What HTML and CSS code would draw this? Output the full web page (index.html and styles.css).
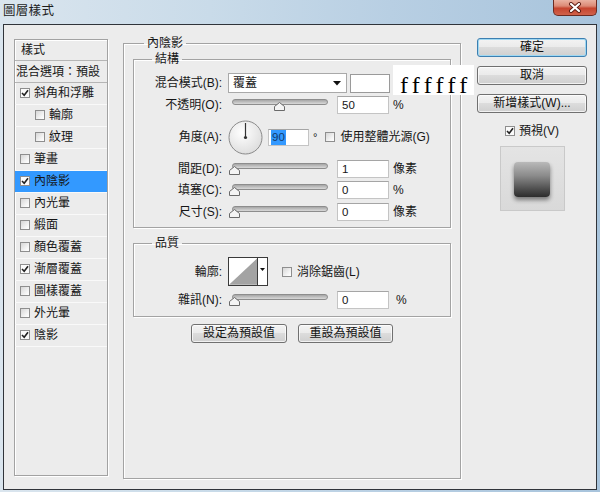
FILE: index.html
```html
<!DOCTYPE html>
<html lang="zh-Hant">
<head>
<meta charset="utf-8">
<title>圖層樣式</title>
<link rel="stylesheet" href="styles.css">
</head>
<body>
<div class="window">
  <div class="titlebar">
    <span class="title">圖層樣式</span>
    <div class="close">
      <svg width="14" height="11" viewBox="0 0 14 11"><path d="M3 2 L11 9 M11 2 L3 9" stroke="#5a1a12" stroke-width="4" stroke-linecap="round"/><path d="M3 2 L11 9 M11 2 L3 9" stroke="#ffffff" stroke-width="2.2" stroke-linecap="round"/></svg>
    </div>
  </div>

  <div class="frame">
    <div class="style-list">
      <div class="list-head">樣式</div>
      <div class="list-blend">混合選項：預設</div>
      <div class="list-item"><span class="cb checked"><svg width="8" height="8" viewBox="0 0 8 8"><path d="M1 4 L3.2 6.3 L7 1.2" fill="none" stroke="#222" stroke-width="1.6"/></svg></span>斜角和浮雕</div>
      <div class="list-item sub"><span class="cb"></span>輪廓</div>
      <div class="list-item sub"><span class="cb"></span>紋理</div>
      <div class="list-item"><span class="cb"></span>筆畫</div>
      <div class="list-item selected"><span class="cb checked"><svg width="8" height="8" viewBox="0 0 8 8"><path d="M1 4 L3.2 6.3 L7 1.2" fill="none" stroke="#222" stroke-width="1.6"/></svg></span>內陰影</div>
      <div class="list-item"><span class="cb"></span>內光暈</div>
      <div class="list-item"><span class="cb"></span>緞面</div>
      <div class="list-item"><span class="cb"></span>顏色覆蓋</div>
      <div class="list-item"><span class="cb checked"><svg width="8" height="8" viewBox="0 0 8 8"><path d="M1 4 L3.2 6.3 L7 1.2" fill="none" stroke="#222" stroke-width="1.6"/></svg></span>漸層覆蓋</div>
      <div class="list-item"><span class="cb"></span>圖樣覆蓋</div>
      <div class="list-item"><span class="cb"></span>外光暈</div>
      <div class="list-item"><span class="cb checked"><svg width="8" height="8" viewBox="0 0 8 8"><path d="M1 4 L3.2 6.3 L7 1.2" fill="none" stroke="#222" stroke-width="1.6"/></svg></span>陰影</div>
    </div>

    <fieldset class="group outer">
      <legend>內陰影</legend>

      <fieldset class="group inner">
        <legend>結構</legend>
        <div class="form structure">
          <span class="lbl">混合模式(B):</span>
          <div class="ctl">
            <div class="select"><span>覆蓋</span><svg class="caret" width="8" height="5" viewBox="0 0 8 5"><path d="M0 0 H8 L4 4.5 Z" fill="#111"/></svg></div>
            <span class="color-swatch"></span>
            <span class="hex-note">ffffff</span>
          </div>

          <span class="lbl">不透明(O):</span>
          <div class="ctl">
            <div class="slider"><span class="track"></span><svg class="thumb" style="left:46px" width="11" height="9" viewBox="0 0 11 9"><polygon points="5.5,0.5 10.5,4.5 10.5,8.5 0.5,8.5 0.5,4.5" fill="#f4f4f4" stroke="#6a6a6a"/></svg></div>
            <span class="field">50</span><span class="unit">%</span>
          </div>

          <span class="lbl">角度(A):</span>
          <div class="ctl">
            <svg class="dial" width="35" height="35" viewBox="0 0 35 35">
              <defs><radialGradient id="dg" cx="40%" cy="35%" r="70%"><stop offset="0" stop-color="#ffffff"/><stop offset="1" stop-color="#dcdcdc"/></radialGradient></defs>
              <circle cx="17.5" cy="17.5" r="16.5" fill="url(#dg)" stroke="#8a8a8a"/>
              <line x1="17.5" y1="17.5" x2="17.5" y2="3" stroke="#333" stroke-width="1.2"/>
              <circle cx="17.5" cy="17.5" r="1.6" fill="#333"/>
            </svg>
            <span class="field angle"><span class="sel">90</span></span>
            <span class="deg">°</span>
            <span class="cb global-cb"></span>
            <span class="cb-text">使用整體光源(G)</span>
          </div>

          <span class="lbl">間距(D):</span>
          <div class="ctl">
            <div class="slider"><span class="track"></span><svg class="thumb" style="left:1px" width="11" height="9" viewBox="0 0 11 9"><polygon points="5.5,0.5 10.5,4.5 10.5,8.5 0.5,8.5 0.5,4.5" fill="#f4f4f4" stroke="#6a6a6a"/></svg></div>
            <span class="field">1</span><span class="unit">像素</span>
          </div>

          <span class="lbl">填塞(C):</span>
          <div class="ctl">
            <div class="slider"><span class="track"></span><svg class="thumb" style="left:1px" width="11" height="9" viewBox="0 0 11 9"><polygon points="5.5,0.5 10.5,4.5 10.5,8.5 0.5,8.5 0.5,4.5" fill="#f4f4f4" stroke="#6a6a6a"/></svg></div>
            <span class="field">0</span><span class="unit">%</span>
          </div>

          <span class="lbl">尺寸(S):</span>
          <div class="ctl">
            <div class="slider"><span class="track"></span><svg class="thumb" style="left:1px" width="11" height="9" viewBox="0 0 11 9"><polygon points="5.5,0.5 10.5,4.5 10.5,8.5 0.5,8.5 0.5,4.5" fill="#f4f4f4" stroke="#6a6a6a"/></svg></div>
            <span class="field">0</span><span class="unit">像素</span>
          </div>
        </div>
      </fieldset>

      <fieldset class="group inner quality">
        <legend>品質</legend>
        <div class="form quality-form">
          <span class="lbl">輪廓:</span>
          <div class="ctl">
            <div class="contour">
              <svg class="curve" width="29" height="27" viewBox="0 0 29 27"><polygon points="0,27 29,0 29,27" fill="#a3a3a3"/></svg>
              <span class="contour-arrow"><svg width="5" height="3" viewBox="0 0 5 3"><path d="M0 0 H5 L2.5 3 Z" fill="#111"/></svg></span>
            </div>
            <span class="cb aa-cb"></span>
            <span class="cb-text">消除鋸齒(L)</span>
          </div>

          <span class="lbl">雜訊(N):</span>
          <div class="ctl">
            <div class="slider"><span class="track"></span><svg class="thumb" style="left:1px" width="11" height="9" viewBox="0 0 11 9"><polygon points="5.5,0.5 10.5,4.5 10.5,8.5 0.5,8.5 0.5,4.5" fill="#f4f4f4" stroke="#6a6a6a"/></svg></div>
            <span class="field">0</span><span class="unit wide">%</span>
          </div>
        </div>
      </fieldset>

      <div class="defaults">
        <button class="btn set-default">設定為預設值</button>
        <button class="btn reset-default">重設為預設值</button>
      </div>
    </fieldset>

    <div class="side">
      <button class="btn side-btn primary">確定</button>
      <button class="btn side-btn">取消</button>
      <button class="btn side-btn">新增樣式(W)...</button>
      <div class="preview-toggle"><span class="cb checked"><svg width="8" height="8" viewBox="0 0 8 8"><path d="M1 4 L3.2 6.3 L7 1.2" fill="none" stroke="#222" stroke-width="1.6"/></svg></span><span>預視(V)</span></div>
      <div class="preview"><div class="preview-square"></div></div>
    </div>
  </div>
</div>
</body>
</html>
```

FILE: styles.css
```css
* { box-sizing: border-box; }
html, body { margin: 0; padding: 0; }
body {
  width: 600px;
  height: 492px;
  overflow: hidden;
  font-family: "Liberation Sans", "Noto Sans CJK TC", sans-serif;
  font-size: 12px;
  color: #161616;
}

.window {
  width: 600px;
  height: 492px;
  display: flex;
  flex-direction: column;
  background: linear-gradient(90deg, #dae5ee 0%, #c9dbe9 35%, #b8cfe3 65%, #a8c4dc 100%);
}

.titlebar {
  height: 24px;
  flex: none;
  display: flex;
  justify-content: space-between;
  align-items: flex-start;
  padding: 0 3px;
}
.title {
  margin-top: 4px;
  font-size: 12.5px;
  line-height: 15px;
  letter-spacing: 0.3px;
  color: #1c1c1c;
}
.close {
  width: 44px;
  height: 16px;
  border: 1px solid #6b2b22;
  border-top: none;
  border-radius: 0 0 5px 5px;
  background: linear-gradient(#eab2a2 0%, #dc8a76 40%, #c6452f 55%, #d0624b 100%);
  display: flex;
  align-items: center;
  justify-content: center;
}

.frame {
  flex: none;
  margin: 0 3px;
  height: 466px;
  border: 1px solid #30343a;
  background: #ececec;
  display: flex;
  align-items: flex-start;
  padding: 14px 0 0 10px;
}

/* left style list */
.style-list {
  flex: none;
  width: 94px;
  height: 437px;
  border: 1px solid #a2a2a2;
  box-shadow: 1px 1px 0 #ffffff, inset 1px 1px 0 #ffffff;
  line-height: 14px;
}
.list-head {
  height: 21px;
  padding: 3px 0 0 6px;
  border-bottom: 1px solid #b5b5b5;
}
.list-blend {
  height: 22px;
  padding: 4px 0 0 1px;
  border-bottom: 1px solid #b5b5b5;
  white-space: nowrap;
}
.list-item {
  height: 22px;
  display: flex;
  align-items: center;
  gap: 4px;
  padding: 0 0 1px 5px;
  border-bottom: 1px solid #f9f9f9;
  white-space: nowrap;
}
.list-item.sub { padding-left: 20px; }
.list-item.selected { background: #3399ff; }

.cb {
  flex: none;
  width: 10px;
  height: 10px;
  border: 1px solid #8e8e8e;
  background: linear-gradient(135deg, #d6d6d6 0%, #f6f6f6 70%, #ffffff 100%);
  display: inline-flex;
  align-items: center;
  justify-content: center;
}
.cb.checked { background: #fbfbfb; }

/* group boxes */
.group {
  margin: 0;
  min-width: 0;
  border: 1px solid #a3a3a3;
  box-shadow: 1px 1px 0 #ffffff, inset 1px 1px 0 #ffffff;
}
.group > legend {
  padding: 0 3px;
  line-height: 14px;
  font-size: 12px;
}
.outer {
  flex: none;
  width: 338px;
  height: 443px;
  margin: -3px 0 0 15px;
  padding: 2px 9px 0 9px;
}
.outer > legend { margin-left: 11px; }
.inner {
  width: 318px;
  padding: 6px 10px 5px 10px;
}
.inner > legend { margin-left: 8px; }
.quality { margin-top: 8px; }

.form {
  display: grid;
  grid-template-columns: 78px 1fr;
  column-gap: 6px;
  align-items: center;
}
.structure { grid-template-rows: 22px 22px 42px 21px 22px 21px; }
.quality-form { grid-template-rows: 31px 22px; row-gap: 2px; }

.lbl {
  text-align: right;
  white-space: nowrap;
  line-height: 14px;
}
.ctl {
  display: flex;
  align-items: center;
  white-space: nowrap;
  line-height: 14px;
}

.select {
  flex: none;
  width: 119px;
  height: 20px;
  border: 1px solid #a9a9a9;
  background: #ffffff;
  display: flex;
  align-items: center;
  justify-content: space-between;
  padding: 0 5px 0 4px;
}
.color-swatch {
  flex: none;
  width: 40px;
  height: 19px;
  margin-left: 3px;
  border: 1px solid #9a9a9a;
  background: #ffffff;
}
.hex-note {
  flex: none;
  height: 30px;
  margin: -6px 0 0 3px;
  padding: 0 2px 0 7px;
  background: #ffffff;
  font-family: "Liberation Serif", serif;
  font-size: 24px;
  line-height: 40px;
  letter-spacing: 4.3px;
  color: #000000;
}

.slider {
  flex: none;
  position: relative;
  width: 104px;
  height: 14px;
}
.track {
  display: block;
  margin: 1px 0 0 4px;
  width: 96px;
  height: 6px;
  border: 1px solid #8d8d8d;
  border-radius: 3px;
  background: linear-gradient(#a6a6a6, #d9d9d9);
}
.thumb {
  position: absolute;
  top: 4px;
}

.field {
  flex: none;
  width: 52px;
  height: 18px;
  margin-left: 5px;
  border: 1px solid #c4c4c4;
  border-top-color: #a5a5a5;
  background: #ffffff;
  padding-left: 4px;
  font-size: 11.5px;
  line-height: 16px;
}
.unit { margin-left: 4px; }
.unit.wide { margin-left: 7px; }

.dial { flex: none; display: block; }
.field.angle {
  width: 41px;
  height: 17px;
  margin-left: 5px;
  padding-left: 2px;
  line-height: 15px;
}
.sel {
  display: inline-block;
  background: #3399ff;
  color: #123a6b;
  padding: 0 1px;
}
.deg { margin-left: 4px; font-size: 11px; }
.global-cb { margin-left: 8px; }
.cb-text { margin-left: 5px; }

.contour {
  flex: none;
  display: flex;
  width: 40px;
  height: 29px;
  border: 1px solid #3a3a3a;
  background: #ffffff;
}
.curve { display: block; }
.contour-arrow {
  width: 10px;
  border-left: 1px solid #3a3a3a;
  display: flex;
  justify-content: center;
  padding-top: 10px;
}
.contour-arrow svg { display: block; }
.aa-cb { margin-left: 14px; }

/* buttons */
.btn {
  font: inherit;
  font-size: 12px;
  color: #111;
  height: 19px;
  padding: 0;
  line-height: 17px;
  border: 1px solid #707070;
  border-radius: 3px;
  background: linear-gradient(#f3f3f3 0%, #ebebeb 45%, #dcdcdc 50%, #cfcfcf 100%);
  box-shadow: inset 0 0 0 1px rgba(255,255,255,0.7);
}
.defaults {
  display: flex;
  justify-content: center;
  gap: 11px;
  margin-top: 7px;
}
.set-default { width: 96px; }
.reset-default { width: 95px; }

.side {
  flex: none;
  width: 110px;
  margin: -1px 0 0 16px;
  display: flex;
  flex-direction: column;
  align-items: center;
}
.side-btn { width: 110px; }
.side-btn + .side-btn { margin-top: 9px; }
.primary {
  border-color: #3c7fb1;
  box-shadow: inset 0 0 0 1px #9fd8f2;
}
.preview-toggle {
  display: flex;
  align-items: center;
  gap: 4px;
  margin-top: 11px;
  line-height: 14px;
}
.preview {
  margin-top: 8px;
  width: 65px;
  height: 65px;
  border: 1px solid #c9c9c9;
  background: linear-gradient(#e4e4e4, #d9d9d9);
  display: flex;
  align-items: center;
  justify-content: center;
}
.preview-square {
  width: 36px;
  height: 35px;
  margin-top: 2px;
  border-radius: 4px;
  background: linear-gradient(#b9b9b9 0%, #8a8a8a 40%, #4a4a4a 80%, #2c2c2c 100%);
  box-shadow: 0 3px 4px rgba(0,0,0,0.45);
}
```
